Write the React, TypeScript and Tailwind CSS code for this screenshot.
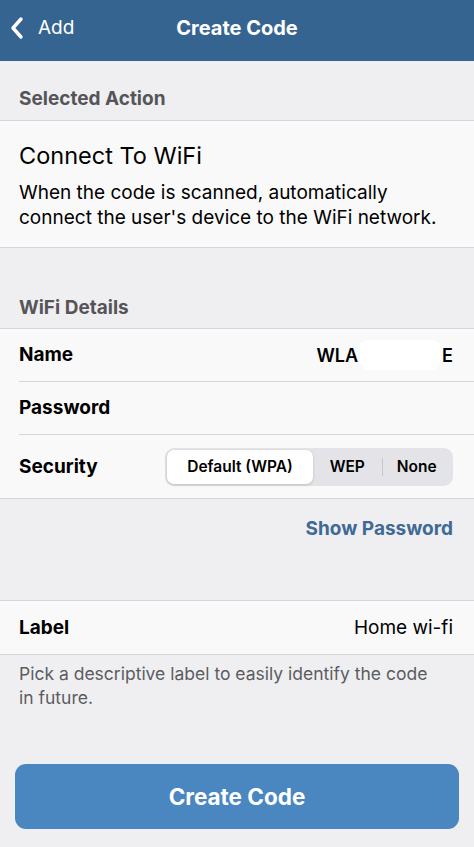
import React from 'react';

const font = { fontFamily: 'Inter, "Noto Sans", sans-serif' };

function Row({ label, children, last }: { label: string; children?: React.ReactNode; last?: boolean }) {
  return (
    <div className="pl-[19px]">
      <div className={`flex h-[53px] items-center justify-between pr-[21px] ${last ? '' : 'border-b border-[#d6d6da]'}`}>
        <span className="text-[19px] font-bold text-black">{label}</span>
        {children}
      </div>
    </div>
  );
}

export default function App() {
  return (
    <div style={font} className="flex h-[847px] w-[474px] flex-col bg-[#efeff2]">
      <div className="relative flex h-[61px] items-center justify-center bg-[#366491] pb-[5px]">
        <div className="absolute left-[10px] top-0 flex h-full items-center gap-[14px] pb-[5px] text-white">
          <svg width="14" height="24" viewBox="0 0 14 24" fill="none">
            <path d="M11 3 L3 12 L11 21" stroke="white" strokeWidth="3.4" strokeLinecap="round" strokeLinejoin="round" />
          </svg>
          <span className="text-[19px]">Add</span>
        </div>
        <span className="text-[20px] font-bold text-white">Create Code</span>
      </div>

      <div className="flex h-[60px] items-end border-b border-[#d6d6da] px-[19px] pb-[7px]">
        <span className="text-[19px] font-bold text-[#555558]">Selected Action</span>
      </div>
      <div className="border-b border-[#d6d6da] bg-[#f9f9f9] px-[19px] pb-[17px] pt-[17px]">
        <div className="text-[23.5px] text-black">Connect To WiFi</div>
        <div className="mt-[7px] text-[19px] leading-[25px] text-black">
          When the code is scanned, automatically connect the user's device to the WiFi network.
        </div>
      </div>

      <div className="flex h-[81px] items-end border-b border-[#d6d6da] px-[19px] pb-[6px]">
        <span className="text-[19px] font-bold text-[#555558]">WiFi Details</span>
      </div>
      <div className="border-b border-[#d6d6da] bg-[#f9f9f9]">
        <Row label="Name">
          <span className="flex items-center text-[18px] font-semibold text-black">
            WLA
            <span className="mx-[2px] h-[30px] w-[80px] rounded-[8px] bg-white" />
            E
          </span>
        </Row>
        <Row label="Password" />
        <div className="flex h-[63px] items-center justify-between pl-[19px] pr-[21px]">
          <span className="text-[19px] font-bold text-black">Security</span>
          <div className="flex h-[38px] w-[288px] items-center rounded-[9px] bg-[#e4e4e8] p-[2px] text-[15.5px] font-semibold text-black">
            <div className="flex h-full w-[146px] items-center justify-center rounded-[7px] bg-white shadow-[0_1px_3px_rgba(0,0,0,0.18)]">
              Default (WPA)
            </div>
            <div className="flex flex-1 items-center justify-center">WEP</div>
            <div className="h-[18px] w-px bg-[#c8c8cc]" />
            <div className="flex flex-1 items-center justify-center">None</div>
          </div>
        </div>
      </div>

      <div className="flex h-[102px] justify-end border-b border-[#d6d6da] pr-[21px] pt-[16px]">
        <span className="text-[19px] font-bold text-[#3e6a94]">Show Password</span>
      </div>
      <div className="border-b border-[#d6d6da] bg-[#f9f9f9]">
        <Row label="Label" last>
          <span className="text-[19px] text-black">Home wi-fi</span>
        </Row>
      </div>
      <div className="pl-[19px] pr-[40px] pt-[7px] text-[17.5px] leading-[24px] text-[#5c5c60]">
        Pick a descriptive label to easily identify the code in future.
      </div>

      <div className="mt-auto px-[15px] pb-[18px]">
        <button className="flex h-[65px] w-full items-center justify-center rounded-[11px] bg-[#4a86bf] text-[22.5px] font-bold text-white">
          Create Code
        </button>
      </div>
    </div>
  );
}
